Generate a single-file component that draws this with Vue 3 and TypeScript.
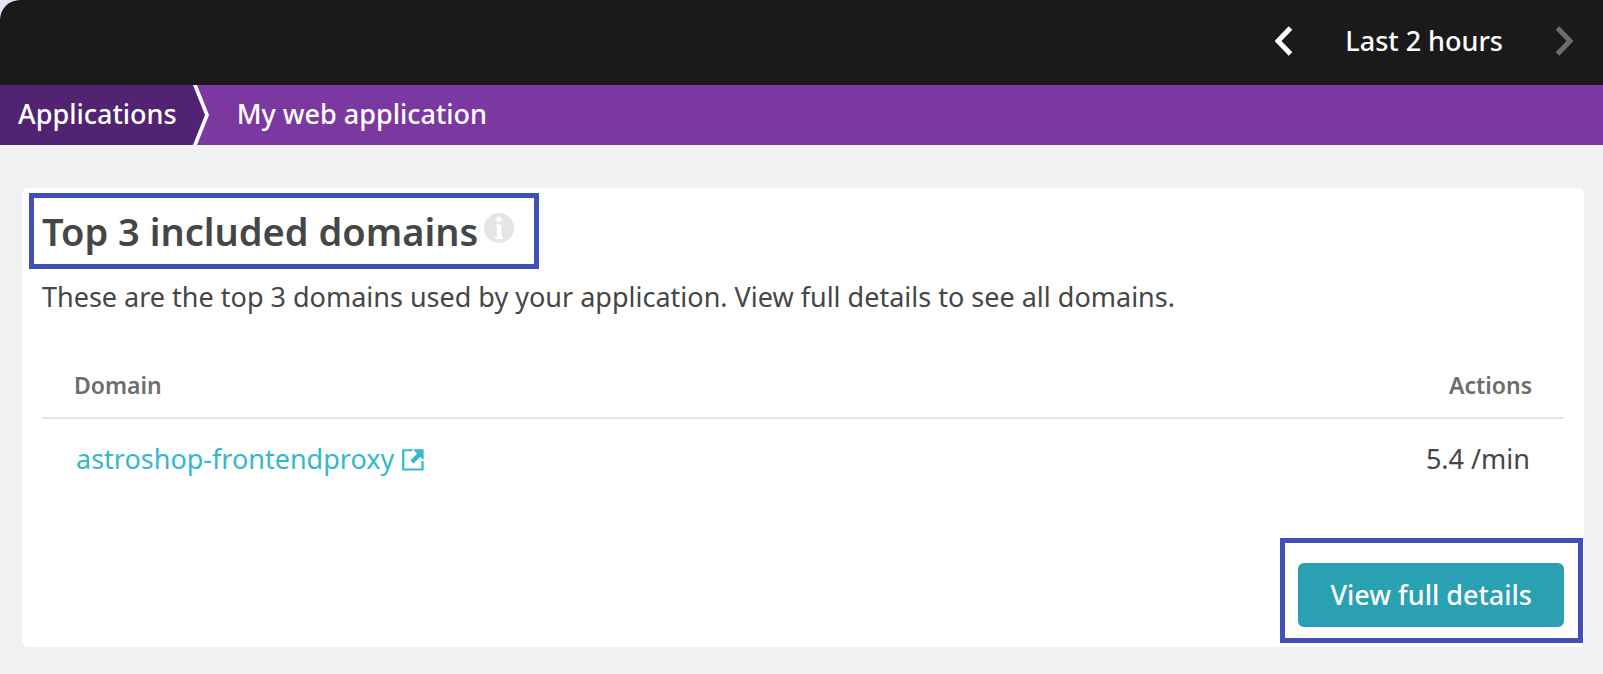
<script setup lang="ts">
interface DomainRow {
  name: string
  actions: string
}

const rows: DomainRow[] = [{ name: 'astroshop-frontendproxy', actions: '5.4 /min' }]
</script>

<template>
  <div class="page">
    <header class="topbar">
      <div class="timeframe">
        <button class="step" type="button" aria-label="Previous timeframe">
          <svg width="18" height="30" viewBox="0 0 18 30">
            <path d="M15.500 2 L3 15 L15.500 28" fill="none" stroke="#fff" stroke-width="5" />
          </svg>
        </button>
        <button class="range" type="button">Last 2 hours</button>
        <button class="step" type="button" aria-label="Next timeframe" disabled>
          <svg width="18" height="30" viewBox="0 0 18 30">
            <path d="M2.500 2 L15 15 L2.500 28" fill="none" stroke="#6d6d6d" stroke-width="5" />
          </svg>
        </button>
      </div>
    </header>

    <nav class="crumbs" aria-label="Breadcrumb">
      <a class="crumb root" href="#">Applications</a>
      <svg class="divider" width="16" height="60" viewBox="0 0 16 60">
        <path d="M0 0 L13 30 L0 60 Z" fill="#522273" />
        <path d="M0 0 H4 L16 30 L4 60 H0 L12 30 Z" fill="#fff" />
      </svg>
      <a class="crumb current" href="#" aria-current="page">My web application</a>
    </nav>

    <main class="content">
      <section class="card">
        <div class="frame title-frame">
          <h2>Top 3 included domains</h2>
          <svg class="info" width="30" height="30" viewBox="0 0 30 30">
            <circle cx="15" cy="15" r="15" fill="#e5e5e5" />
            <circle cx="15" cy="6.500" r="2.800" fill="#fff" />
            <path d="M11.500 11.500 H17.500 V24 H19 V26 H11.500 V24 H13 V13.500 H11.500 Z" fill="#fff" />
          </svg>
        </div>
        <p class="lead">
          These are the top 3 domains used by your application. View full details to see all domains.
        </p>

        <table>
          <thead>
            <tr>
              <th scope="col">Domain</th>
              <th scope="col" class="num">Actions</th>
            </tr>
          </thead>
          <tbody>
            <tr v-for="row in rows" :key="row.name">
              <td>
                <a class="domain" href="#">
                  <span>{{ row.name }}</span>
                  <svg width="22" height="24" viewBox="0 0 22 24">
                    <path d="M10.500 3.250 H1.250 V22.500 H20.500 V14" fill="none" stroke="#33b8cc" stroke-width="2.200" />
                    <path d="M11 2.200 H21.600 V13 L18.300 9.800 L11.500 16.500 L8.500 13.500 L15 6.800 Z" fill="#33b8cc" />
                  </svg>
                </a>
              </td>
              <td class="num">{{ row.actions }}</td>
            </tr>
          </tbody>
        </table>

        <div class="actions">
          <div class="frame button-frame">
            <button class="primary" type="button">View full details</button>
          </div>
        </div>
      </section>
    </main>
  </div>
</template>

<style>
body {
  margin: 0;
  background: #e3e5f1;
}
</style>

<style scoped>
.page {
  box-sizing: border-box;
  min-height: 100vh;
  overflow: hidden;
  border-top-left-radius: 20px;
  background: #f1f1f1;
  color: #454646;
  font-family: "Noto Sans", "Open Sans", sans-serif;
  font-size: 27px;
  line-height: 36px;
}

button {
  padding: 0;
  border: 0;
  background: none;
  color: inherit;
  font: inherit;
}

a {
  text-decoration: none;
}

svg {
  display: block;
  flex: none;
}

.topbar {
  display: flex;
  justify-content: flex-end;
  align-items: center;
  height: 85px;
  box-sizing: border-box;
  padding: 0 30px 4px;
  background: #1a1a1a;
  color: #fff;
}

.timeframe {
  display: flex;
  align-items: center;
  gap: 52px;
}

.range,
.crumb,
.primary {
  font-weight: 500;
}

.crumbs {
  display: flex;
  height: 60px;
  background: #7c38a1;
}

.crumb {
  display: flex;
  align-items: center;
  padding-bottom: 2px;
  color: #fff;
}

.root {
  padding-left: 18px;
  padding-right: 16px;
  background: #522273;
}

.current {
  padding-left: 28px;
}

.content {
  padding: 43px 19px 26px 22px;
}

.card {
  padding: 5px 20px 4px;
  border-radius: 6px;
  background: #fff;
}

.frame {
  border: 5px solid #4150b5;
}

.title-frame {
  display: flex;
  width: fit-content;
  margin-left: -13px;
  padding: 5px 20px 5px 8px;
}

h2 {
  margin: 0;
  font-size: 38px;
  line-height: 56px;
  font-weight: 600;
}

.info {
  margin: 10px 0 0 6px;
}

.lead {
  margin: 10px 0 0;
}

table {
  width: 100%;
  margin-top: 45px;
  border-collapse: collapse;
}

th {
  padding: 7px 32px 14px;
  border-bottom: 2px solid #e5e5e5;
  color: #6d6d6d;
  font-size: 23px;
  font-weight: 600;
  text-align: left;
}

td {
  padding: 22px 34px;
}

.num {
  text-align: right;
}

.domain {
  display: flex;
  align-items: center;
  gap: 8px;
  color: #33b8cc;
}

.actions {
  display: flex;
  justify-content: flex-end;
  margin-top: 39px;
}

.button-frame {
  margin-right: -19px;
  padding: 20px 14px 11px 13px;
}

.primary {
  padding: 14px 32px;
  border-radius: 6px;
  background: #2aa1b3;
  color: #fff;
}
</style>
